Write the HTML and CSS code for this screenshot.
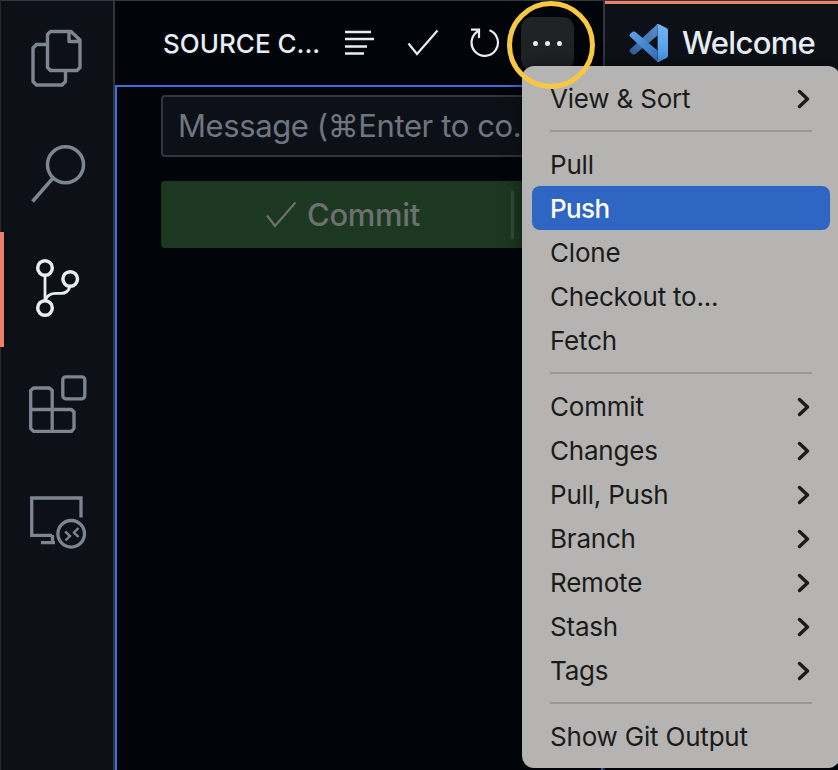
FILE: index.html
```html
<!DOCTYPE html>
<html lang="en">
<head>
<meta charset="utf-8">
<title>Source Control</title>
<link rel="stylesheet" href="styles.css">
</head>
<body>
<div class="window">
  <nav class="activity">
    <div class="activity-item"><svg width="115" height="115" viewBox="0 0 115 115" fill="none" stroke="#7d8590" stroke-width="3.4" stroke-linejoin="round"><path d="M47 44.500H36.500L33 48V81.500L36.500 85H62L65.500 81.500V72M47.500 34.500L50.500 31.500H71L80 40V67.500L77 70.500H50.500L47.500 67.500Z M69 31.500V41.500H80"/></svg></div>
    <div class="activity-item"><svg width="115" height="115" viewBox="0 0 115 115" fill="none" stroke="#7d8590" stroke-width="3.5"><circle cx="65.500" cy="48.700" r="18"/><path d="M53 62L32.500 85.500"/></svg></div>
    <div class="activity-item current"><svg width="115" height="115" viewBox="0 0 115 115" fill="none" stroke="#e6edf3" stroke-width="3.500"><circle cx="45" cy="37" r="7.300"/><circle cx="70.200" cy="48" r="7.300"/><circle cx="45" cy="77" r="7.300"/><path stroke-width="2.800" d="M45 44.500V69.500M45.500 69C47 64 51 62.400 56 62.400H61C66 62.400 68.500 60.500 70 55.500"/></svg></div>
    <div class="activity-item"><svg width="115" height="115" viewBox="0 0 115 115" fill="none" stroke="#7d8590" stroke-width="3.300" stroke-linejoin="round"><rect x="62.800" y="29.800" width="22" height="22" rx="3"/><path d="M33.500 41H49.500L52.200 43.500V62.500H71.500L74 65V81.500L71.500 84.300H33.500L30.700 81.500V43.500ZM30.700 62.500H52.200V84.300"/></svg></div>
    <div class="activity-item"><svg width="115" height="115" viewBox="0 -6 115 115" fill="none" stroke="#7d8590" stroke-width="3.300"><path d="M52 67.300H31.700V30H81V49.500M41 74.700H55M52.500 67V74"/><circle cx="71.200" cy="65.800" r="13.300"/><path stroke-width="2.400" d="M65.200 63.500L70 68L65.500 72.500M78.500 60L74 64.500L78.500 69"/></svg></div>
  </nav>

  <aside class="sidebar">
    <header class="sidebar-head">
      <h1 class="sidebar-title">SOURCE C...</h1>
      <div class="actions">
        <svg width="30" height="30" viewBox="0 0 30 30" fill="none" stroke="#e6edf3" stroke-width="2.400"><path d="M1 4H27M1 11H30M1 18.500H23M1 25.500H20"/></svg>
        <svg width="32" height="30" viewBox="0 0 32 30" fill="none" stroke="#e6edf3" stroke-width="2.200"><path d="M1.500 15.500L10 26L30.500 2.500"/></svg>
        <svg width="30" height="30" viewBox="0 0 30 30" fill="none" stroke="#e6edf3" stroke-width="2.200"><path d="M19.500 2.300A13.200 13.200 0 1 1 8.500 3M1 1.700H9V10"/></svg>
        <div class="more"><i></i><i></i><i></i></div>
      </div>
    </header>
    <section class="scm">
      <div class="message"><span class="message-text">Message (⌘Enter to co...</span></div>
      <div class="commit">
        <div class="commit-main"><svg width="30" height="27" viewBox="0 0 30 27" fill="none" stroke="#6d7071" stroke-width="2.200"><path d="M1 14.500L9 25L29.500 1.500"/></svg><span class="commit-label">Commit</span></div>
        <div class="commit-divider"></div>
      </div>
    </section>
  </aside>

  <main class="editor">
    <div class="tab">
      <svg width="40" height="40" viewBox="0 0 40 40"><defs><linearGradient id="fin" x1="0" y1="0" x2="0" y2="1"><stop offset="0" stop-color="#72b4f2"/><stop offset="1" stop-color="#4b98e6"/></linearGradient><linearGradient id="blade" x1="0" y1="0" x2="1" y2="1"><stop offset="0" stop-color="#5a9fe6"/><stop offset="1" stop-color="#3672bf"/></linearGradient><linearGradient id="back" x1="1" y1="0" x2="0" y2="1"><stop offset="0" stop-color="#5a8fcb"/><stop offset="1" stop-color="#2f5c96"/></linearGradient></defs><path fill="url(#back)" d="M28.500 1L1 26.500Q0 27.800 1 29L3.500 31.200Q5 32 6.200 31.200L28.500 12.500Z"/><path fill="url(#blade)" d="M28.500 39L1 13.500Q0 12.200 1 11L3.500 8.800Q5 8 6.200 8.800L28.500 27.500Z"/><path fill="url(#fin)" d="M27.500 1.500Q28.700 0.700 30 1.300L37.500 5Q39 5.800 39 7.300V32.700Q39 34.200 37.500 35L30 38.700Q28.700 39.300 27.500 38.500Q28.700 38.200 28.700 36.500V3.500Q28.700 1.800 27.500 1.500Z"/></svg>
      <span class="tab-label">Welcome</span>
    </div>
  </main>
</div>

<div class="menu">
  <div class="item"><span>View &amp; Sort</span><svg class="chev" viewBox="0 0 14 20"><path d="M2.500 2.500L10.500 10L2.500 17.500"/></svg></div>
  <hr>
  <div class="item"><span>Pull</span></div>
  <div class="item selected"><span>Push</span></div>
  <div class="item"><span>Clone</span></div>
  <div class="item"><span>Checkout to...</span></div>
  <div class="item"><span>Fetch</span></div>
  <hr>
  <div class="item"><span>Commit</span><svg class="chev" viewBox="0 0 14 20"><path d="M2.500 2.500L10.500 10L2.500 17.500"/></svg></div>
  <div class="item"><span>Changes</span><svg class="chev" viewBox="0 0 14 20"><path d="M2.500 2.500L10.500 10L2.500 17.500"/></svg></div>
  <div class="item"><span>Pull, Push</span><svg class="chev" viewBox="0 0 14 20"><path d="M2.500 2.500L10.500 10L2.500 17.500"/></svg></div>
  <div class="item"><span>Branch</span><svg class="chev" viewBox="0 0 14 20"><path d="M2.500 2.500L10.500 10L2.500 17.500"/></svg></div>
  <div class="item"><span>Remote</span><svg class="chev" viewBox="0 0 14 20"><path d="M2.500 2.500L10.500 10L2.500 17.500"/></svg></div>
  <div class="item"><span>Stash</span><svg class="chev" viewBox="0 0 14 20"><path d="M2.500 2.500L10.500 10L2.500 17.500"/></svg></div>
  <div class="item"><span>Tags</span><svg class="chev" viewBox="0 0 14 20"><path d="M2.500 2.500L10.500 10L2.500 17.500"/></svg></div>
  <hr>
  <div class="item"><span>Show Git Output</span></div>
</div>
<div class="ring"></div>
</body>
</html>
```
FILE: styles.css
```css
* { box-sizing: border-box; }
body {
  margin: 0;
  width: 838px;
  height: 770px;
  overflow: hidden;
  position: relative;
  background: #010409;
  color: #e6edf3;
  font-family: Inter, "Liberation Sans", sans-serif;
}
svg { display: block; flex: none; }
.window {
  display: flex;
  height: 770px;
  border-top: 1px solid #30363d;
}
.activity {
  width: 115px;
  flex: none;
  background: #0d1117;
  border-right: 2px solid #30363d;
  border-left: 1px solid #24292e;
}
.activity-item { display: flow-root; height: 115.500px; margin-left: -1px; }
.activity-item svg { margin-top: -1px; }
.activity-item.current { height: 115px; margin-bottom: 0.500px; border-left: 4px solid #ec8068; }
.activity-item.current svg { margin-left: -4px; }
.sidebar {
  width: 490px;
  flex: none;
  display: flex;
  flex-direction: column;
  border-right: 2px solid #30363d;
}
.sidebar-head {
  height: 84px;
  display: flex;
  align-items: center;
  justify-content: space-between;
  padding: 0 29px 0 48px;
}
.sidebar-title {
  margin: 2px 0 0;
  font-size: 26px;
  font-weight: 450;
  line-height: 40px;
  letter-spacing: 0;
  white-space: nowrap;
}
.actions { display: flex; align-items: center; gap: 32px; }
.actions svg:nth-child(1) { margin-right: 1px; }
.actions svg:nth-child(2) { margin-right: -1px; }
.more {
  width: 53px;
  height: 53px;
  margin-left: -11px;
  border-radius: 11px;
  background: #1f2326;
  display: flex;
  align-items: center;
  justify-content: center;
  gap: 7px;
}
.more i { width: 5px; height: 5px; border-radius: 50%; background: #e6edf3; }
.scm {
  flex: 1;
  border: 2px solid #3c6ee0;
  border-bottom: 0;
  padding: 8px 0 0 44px;
}
.message {
  height: 62px;
  border: 2px solid #30363d;
  border-radius: 4px;
  background: #0d1117;
  padding-left: 15px;
  display: flex;
  align-items: center;
  color: #6e7681;
  font-size: 31px;
  white-space: nowrap;
}
.message-text { letter-spacing: -0.4px; margin-top: -2px; }
.commit {
  height: 67px;
  margin-top: 24px;
  border-radius: 4px;
  background: #1c3820;
  color: #6d7071;
  display: flex;
  align-items: center;
}
.commit-main {
  width: 350px;
  padding-left: 14px;
  display: flex;
  align-items: center;
  justify-content: center;
  gap: 11px;
}
.commit-label { font-size: 31px; letter-spacing: -0.3px; font-weight: 450; }
.commit-divider { width: 3px; height: 48px; background: #364b39; }
.editor { flex: 1; background: #010409; }
.tab {
  height: 84px;
  border-top: 3px solid #ec8068;
  background: #0d1117;
  display: flex;
  align-items: center;
  gap: 13px;
  padding: 0 0 3px 24px;
}
.tab-label { font-size: 31px; letter-spacing: -0.7px; margin-top: -2px; font-weight: 450; }
.menu {
  position: absolute;
  left: 522px;
  top: 66px;
  width: 318px;
  height: 702px;
  padding: 11px 10px 9px;
  border-radius: 12px;
  background: #b5b4b2;
  box-shadow: 0 0 18px rgba(0, 0, 0, 0.5);
  color: #1b1b1b;
}
.item {
  height: 44px;
  padding: 0 19px 0 18px;
  border-radius: 8px;
  display: flex;
  align-items: center;
  justify-content: space-between;
  font-size: 26px;
  line-height: 44px;
  letter-spacing: -0.2px;
  white-space: nowrap;
}
.selected {
  margin-top: -1px;
  margin-bottom: 1px;
  padding-top: 2px;
  background: #2f65c3;
  color: #fff;
  font-weight: 500;
  letter-spacing: -0.6px;
}
.menu hr {
  height: 2px;
  margin: 9px 18px 11px;
  border: 0;
  background: #989896;
}
.chev {
  width: 14px;
  height: 20px;
  fill: none;
  stroke: #1b1b1b;
  stroke-width: 3.500px;
  stroke-linecap: round;
  stroke-linejoin: round;
}
.ring {
  position: absolute;
  left: 507px;
  top: 1px;
  width: 88px;
  height: 88px;
  border: 5px solid #f6c844;
  border-radius: 50%;
}
```
